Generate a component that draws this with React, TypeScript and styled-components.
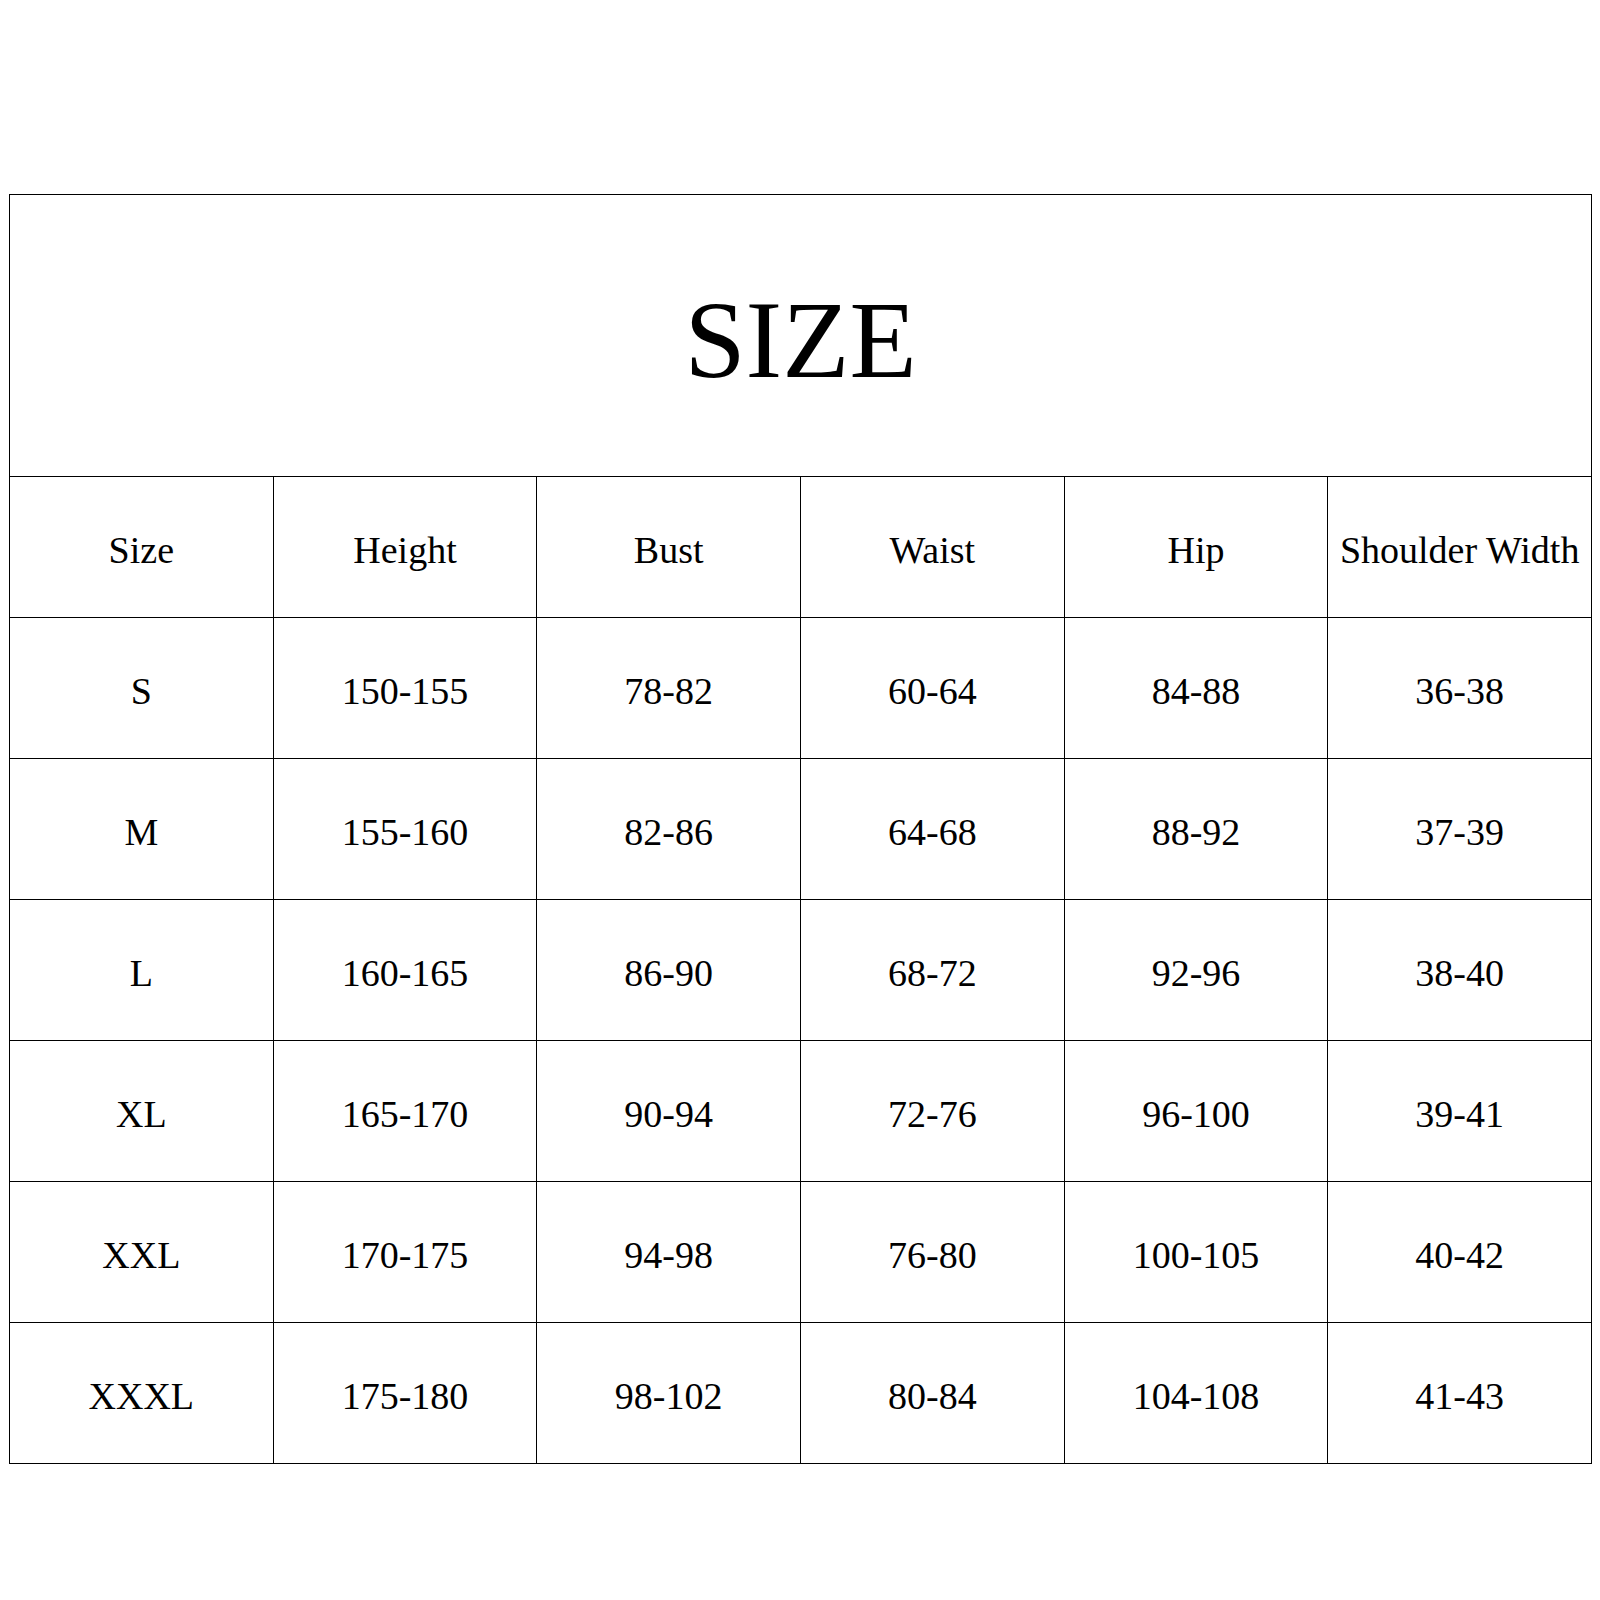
import React from "react";
import styled, { createGlobalStyle } from "styled-components";

const GlobalStyle = createGlobalStyle`
  html, body {
    margin: 0;
    padding: 0;
    background: #ffffff;
  }
  body {
    font-family: "Liberation Serif", "Times New Roman", serif;
    color: #000000;
  }
`;

const Page = styled.div`
  width: 1600px;
  height: 1600px;
  padding: 194px 0 0 9px;
  box-sizing: border-box;
  background: #ffffff;
`;

const Chart = styled.div`
  width: 1583px;
  box-sizing: border-box;
  display: grid;
  grid-template-columns: repeat(6, 1fr);
  grid-template-rows: 282px;
  grid-auto-rows: 141px;
  border-top: 1px solid #000;
  border-left: 1px solid #000;
`;

const TitleCell = styled.div`
  grid-column: 1 / -1;
  box-sizing: border-box;
  border-right: 1px solid #000;
  border-bottom: 1px solid #000;
  display: flex;
  align-items: center;
  justify-content: center;
  padding-top: 9px;
  font-family: "Liberation Serif", "Times New Roman", serif;
  font-size: 110px;
  line-height: 1;
  color: #000;
`;

const Cell = styled.div`
  box-sizing: border-box;
  border-right: 1px solid #000;
  border-bottom: 1px solid #000;
  display: flex;
  align-items: center;
  justify-content: center;
  padding-top: 5px;
  font-family: "Liberation Serif", "Times New Roman", serif;
  font-size: 38px;
  color: #000;
  white-space: nowrap;
`;

const headers = ["Size", "Height", "Bust", "Waist", "Hip", "Shoulder Width"];

const rows: string[][] = [
  ["S", "150-155", "78-82", "60-64", "84-88", "36-38"],
  ["M", "155-160", "82-86", "64-68", "88-92", "37-39"],
  ["L", "160-165", "86-90", "68-72", "92-96", "38-40"],
  ["XL", "165-170", "90-94", "72-76", "96-100", "39-41"],
  ["XXL", "170-175", "94-98", "76-80", "100-105", "40-42"],
  ["XXXL", "175-180", "98-102", "80-84", "104-108", "41-43"],
];

export default function App() {
  return (
    <>
      <GlobalStyle />
      <Page>
        <Chart>
          <TitleCell>SIZE</TitleCell>
          {headers.map((h) => (
            <Cell key={h}>{h}</Cell>
          ))}
          {rows.map((r, i) =>
            r.map((v, j) => <Cell key={`${i}-${j}`}>{v}</Cell>)
          )}
        </Chart>
      </Page>
    </>
  );
}
